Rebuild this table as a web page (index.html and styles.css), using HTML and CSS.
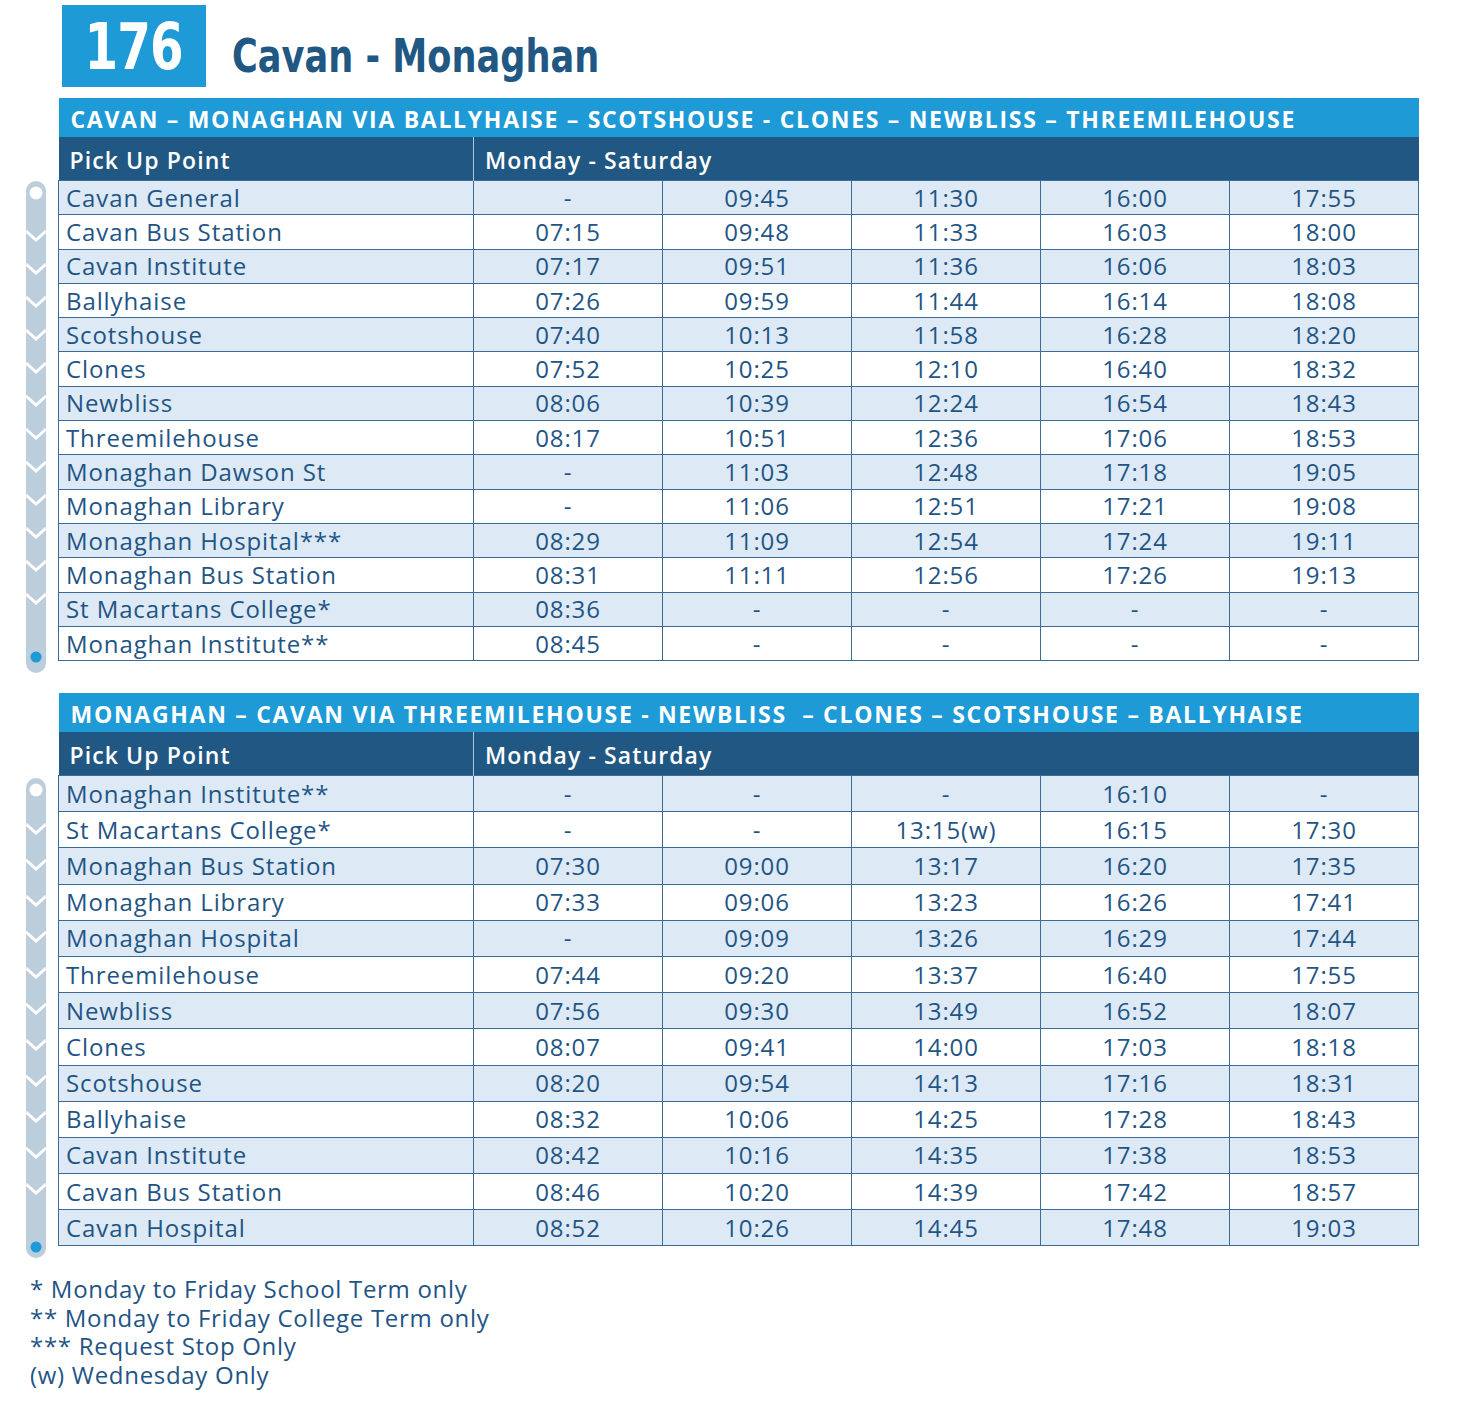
FILE: index.html
```html
<!DOCTYPE html>
<html lang="en">
<head>
<meta charset="utf-8">
<title>176 Cavan - Monaghan</title>
<link rel="stylesheet" href="styles.css">
</head>
<body>
<div class="page">
  <header class="top">
    <div class="route-no"><span class="route-no-text">176</span></div>
    <h1 class="title"><span class="title-text">Cavan - Monaghan</span></h1>
  </header>

  <section class="section sec-a">
    <div class="route">
      <svg class="line line-a" width="20" height="492" viewBox="0 0 20 492">
        <rect x="0" y="0" width="20" height="492" rx="10" fill="#bccddc"/>
        <g fill="none" stroke="#fff" stroke-width="3">
          <polyline points="0,50 10,59 20,50"/>
          <polyline points="0,83 10,92 20,83"/>
          <polyline points="0,116 10,125 20,116"/>
          <polyline points="0,149 10,158 20,149"/>
          <polyline points="0,182 10,191 20,182"/>
          <polyline points="0,215 10,224 20,215"/>
          <polyline points="0,248 10,257 20,248"/>
          <polyline points="0,281 10,290 20,281"/>
          <polyline points="0,314 10,323 20,314"/>
          <polyline points="0,347 10,356 20,347"/>
          <polyline points="0,380 10,389 20,380"/>
          <polyline points="0,413 10,422 20,413"/>
        </g>
        <circle cx="10" cy="12" r="6.5" fill="#fff"/>
        <circle cx="10" cy="476" r="5.5" fill="#1e9ad6"/>
      </svg>
    </div>
    <table class="tt tt-a">
      <colgroup><col class="c-stop"><col class="c-time"><col class="c-time"><col class="c-time"><col class="c-time"><col class="c-time"></colgroup>
      <thead>
        <tr class="band"><th colspan="6">CAVAN – MONAGHAN VIA BALLYHAISE – SCOTSHOUSE - CLONES – NEWBLISS – THREEMILEHOUSE</th></tr>
        <tr class="head"><th class="h-stop">Pick Up Point</th><th class="h-days" colspan="5">Monday - Saturday</th></tr>
      </thead>
      <tbody>
        <tr><td class="stop">Cavan General</td><td>-</td><td>09:45</td><td>11:30</td><td>16:00</td><td>17:55</td></tr>
        <tr><td class="stop">Cavan Bus Station</td><td>07:15</td><td>09:48</td><td>11:33</td><td>16:03</td><td>18:00</td></tr>
        <tr><td class="stop">Cavan Institute</td><td>07:17</td><td>09:51</td><td>11:36</td><td>16:06</td><td>18:03</td></tr>
        <tr><td class="stop">Ballyhaise</td><td>07:26</td><td>09:59</td><td>11:44</td><td>16:14</td><td>18:08</td></tr>
        <tr><td class="stop">Scotshouse</td><td>07:40</td><td>10:13</td><td>11:58</td><td>16:28</td><td>18:20</td></tr>
        <tr><td class="stop">Clones</td><td>07:52</td><td>10:25</td><td>12:10</td><td>16:40</td><td>18:32</td></tr>
        <tr><td class="stop">Newbliss</td><td>08:06</td><td>10:39</td><td>12:24</td><td>16:54</td><td>18:43</td></tr>
        <tr><td class="stop">Threemilehouse</td><td>08:17</td><td>10:51</td><td>12:36</td><td>17:06</td><td>18:53</td></tr>
        <tr><td class="stop">Monaghan Dawson St</td><td>-</td><td>11:03</td><td>12:48</td><td>17:18</td><td>19:05</td></tr>
        <tr><td class="stop">Monaghan Library</td><td>-</td><td>11:06</td><td>12:51</td><td>17:21</td><td>19:08</td></tr>
        <tr><td class="stop">Monaghan Hospital***</td><td>08:29</td><td>11:09</td><td>12:54</td><td>17:24</td><td>19:11</td></tr>
        <tr><td class="stop">Monaghan Bus Station</td><td>08:31</td><td>11:11</td><td>12:56</td><td>17:26</td><td>19:13</td></tr>
        <tr><td class="stop">St Macartans College*</td><td>08:36</td><td>-</td><td>-</td><td>-</td><td>-</td></tr>
        <tr><td class="stop">Monaghan Institute**</td><td>08:45</td><td>-</td><td>-</td><td>-</td><td>-</td></tr>
      </tbody>
    </table>
  </section>

  <section class="section sec-b">
    <div class="route">
      <svg class="line line-b" width="20" height="480" viewBox="0 0 20 480">
        <rect x="0" y="0" width="20" height="480" rx="10" fill="#bccddc"/>
        <g fill="none" stroke="#fff" stroke-width="3">
          <polyline points="0,46 10,55 20,46"/>
          <polyline points="0,82 10,91 20,82"/>
          <polyline points="0,118 10,127 20,118"/>
          <polyline points="0,154 10,163 20,154"/>
          <polyline points="0,190 10,199 20,190"/>
          <polyline points="0,226 10,235 20,226"/>
          <polyline points="0,262 10,271 20,262"/>
          <polyline points="0,298 10,307 20,298"/>
          <polyline points="0,334 10,343 20,334"/>
          <polyline points="0,370 10,379 20,370"/>
          <polyline points="0,406 10,415 20,406"/>
        </g>
        <circle cx="10" cy="12" r="6.5" fill="#fff"/>
        <circle cx="10" cy="469" r="5.5" fill="#1e9ad6"/>
      </svg>
    </div>
    <table class="tt tt-b">
      <colgroup><col class="c-stop"><col class="c-time"><col class="c-time"><col class="c-time"><col class="c-time"><col class="c-time"></colgroup>
      <thead>
        <tr class="band"><th colspan="6">MONAGHAN – CAVAN VIA THREEMILEHOUSE - NEWBLISS &nbsp;– CLONES – SCOTSHOUSE – BALLYHAISE</th></tr>
        <tr class="head"><th class="h-stop">Pick Up Point</th><th class="h-days" colspan="5">Monday - Saturday</th></tr>
      </thead>
      <tbody>
        <tr><td class="stop">Monaghan Institute**</td><td>-</td><td>-</td><td>-</td><td>16:10</td><td>-</td></tr>
        <tr><td class="stop">St Macartans College*</td><td>-</td><td>-</td><td>13:15(w)</td><td>16:15</td><td>17:30</td></tr>
        <tr><td class="stop">Monaghan Bus Station</td><td>07:30</td><td>09:00</td><td>13:17</td><td>16:20</td><td>17:35</td></tr>
        <tr><td class="stop">Monaghan Library</td><td>07:33</td><td>09:06</td><td>13:23</td><td>16:26</td><td>17:41</td></tr>
        <tr><td class="stop">Monaghan Hospital</td><td>-</td><td>09:09</td><td>13:26</td><td>16:29</td><td>17:44</td></tr>
        <tr><td class="stop">Threemilehouse</td><td>07:44</td><td>09:20</td><td>13:37</td><td>16:40</td><td>17:55</td></tr>
        <tr><td class="stop">Newbliss</td><td>07:56</td><td>09:30</td><td>13:49</td><td>16:52</td><td>18:07</td></tr>
        <tr><td class="stop">Clones</td><td>08:07</td><td>09:41</td><td>14:00</td><td>17:03</td><td>18:18</td></tr>
        <tr><td class="stop">Scotshouse</td><td>08:20</td><td>09:54</td><td>14:13</td><td>17:16</td><td>18:31</td></tr>
        <tr><td class="stop">Ballyhaise</td><td>08:32</td><td>10:06</td><td>14:25</td><td>17:28</td><td>18:43</td></tr>
        <tr><td class="stop">Cavan Institute</td><td>08:42</td><td>10:16</td><td>14:35</td><td>17:38</td><td>18:53</td></tr>
        <tr><td class="stop">Cavan Bus Station</td><td>08:46</td><td>10:20</td><td>14:39</td><td>17:42</td><td>18:57</td></tr>
        <tr><td class="stop">Cavan Hospital</td><td>08:52</td><td>10:26</td><td>14:45</td><td>17:48</td><td>19:03</td></tr>
      </tbody>
    </table>
  </section>

  <footer class="notes">
    <p>* Monday to Friday School Term only</p>
    <p>** Monday to Friday College Term only</p>
    <p>*** Request Stop Only</p>
    <p>(w) Wednesday Only</p>
  </footer>
</div>
</body>
</html>
```

FILE: styles.css
```css
html, body {
  margin: 0;
  padding: 0;
  background: #ffffff;
}

body {
  font-family: "Open Sans", "Liberation Sans", sans-serif;
  color: #1f5585;
}

.page {
  padding-top: 5px;
  width: 1462px;
}

.top {
  display: flex;
  align-items: flex-end;
  margin-left: 62px;
  height: 82px;
}

.route-no {
  width: 144px;
  height: 82px;
  background: #1e9ad6;
  color: #ffffff;
  font-family: "DejaVu Sans Condensed", "DejaVu Sans", sans-serif;
  font-weight: bold;
  font-size: 64px;
  line-height: 84px;
  text-align: center;
}

.route-no-text {
  display: inline-block;
  transform: scaleX(0.84);
  transform-origin: center;
  letter-spacing: -1px;
}

.title {
  margin: 0 0 3px 26px;
  font-family: "DejaVu Sans Condensed", "DejaVu Sans", sans-serif;
  font-weight: bold;
  font-size: 46px;
  line-height: 56px;
  color: #215783;
  white-space: nowrap;
}

.title-text {
  display: inline-block;
  transform: scaleX(0.85);
  transform-origin: left center;
}

.section {
  display: flex;
  align-items: flex-start;
}

.sec-a {
  margin-top: 11px;
}

.sec-b {
  margin-top: 20px;
}

.route {
  width: 58px;
  flex: none;
  padding-left: 26px;
  box-sizing: border-box;
}

.line {
  display: block;
}

.line-a {
  margin-top: 83px;
}

.line-b {
  margin-top: 85px;
}

.tt {
  width: 1360px;
  border-collapse: collapse;
  table-layout: fixed;
  font-size: 24px;
  letter-spacing: 0.9px;
}

.c-stop {
  width: 415px;
}

.c-time {
  width: 189px;
}

.band th {
  background: #1e9ad6;
  color: #ffffff;
  font-weight: 700;
  font-size: 23px;
  text-align: left;
  padding: 2px 0 0 12px;
  height: 37px;
  letter-spacing: 1.71px;
  white-space: pre;
}

.head th {
  background: #215783;
  color: #ffffff;
  font-weight: 600;
  font-size: 23px;
  letter-spacing: 1.1px;
  text-align: left;
  height: 41px;
  padding: 2px 0 0 11px;
}

.head .h-stop {
  border-right: 1px solid #b3c6da;
}

.tt td {
  border: 1px solid #3e6a96;
  text-align: center;
  padding: 0;
  line-height: 1;
  white-space: nowrap;
}

.tt-a td {
  height: 33.3px;
}

.tt-b td {
  height: 35.2px;
}

.tt td.stop {
  text-align: left;
  padding-left: 7px;
}

.tt tbody tr:nth-child(odd) td {
  background: #dde9f5;
}

.tt tbody tr:nth-child(even) td {
  background: #ffffff;
}

.notes {
  margin: 17px 0 0 30px;
  font-size: 24px;
  letter-spacing: 0.7px;
  line-height: 28.7px;
}

.notes p {
  margin: 0;
}
```
